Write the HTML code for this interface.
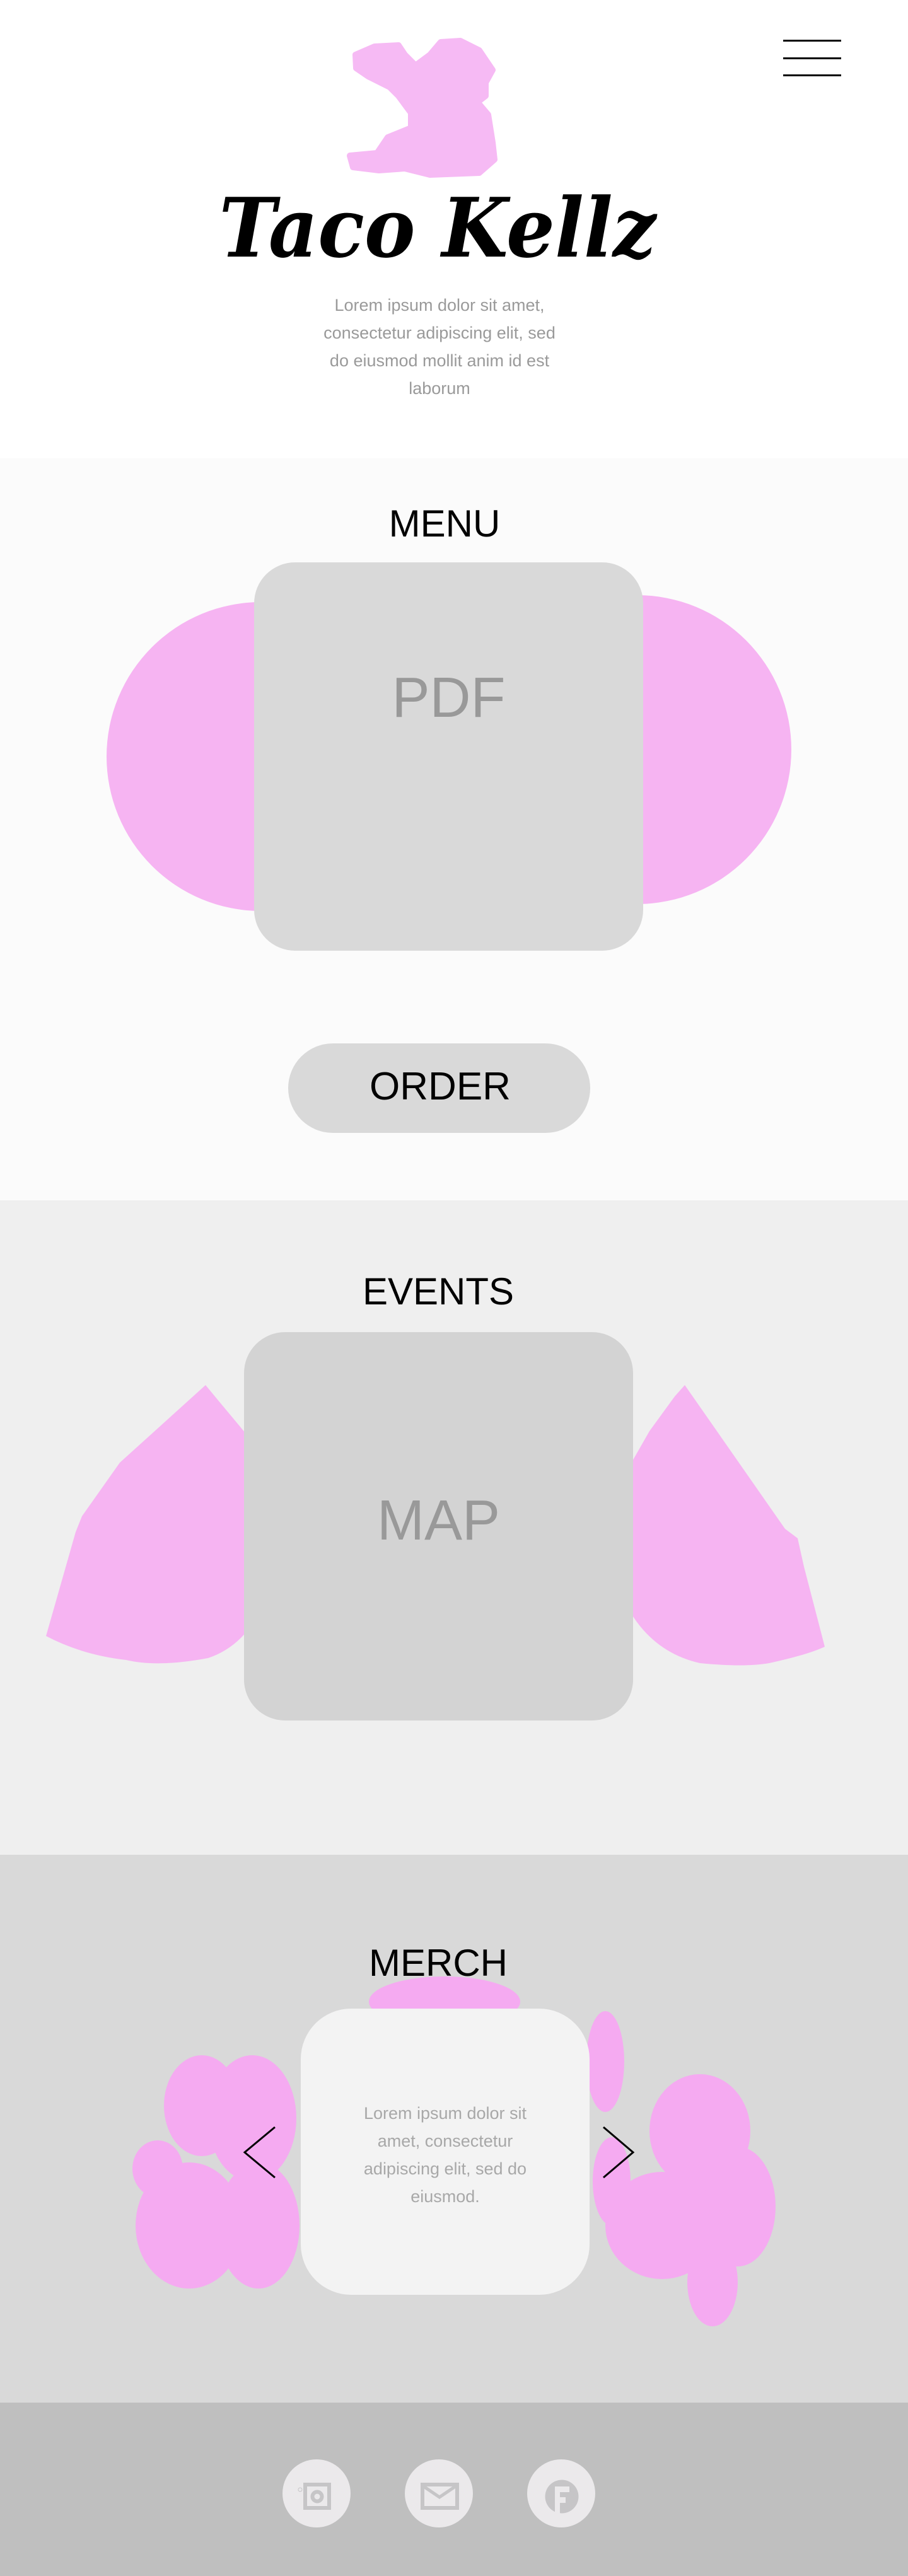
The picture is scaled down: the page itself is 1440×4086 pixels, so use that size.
<!DOCTYPE html>
<html><head><meta charset="utf-8">
<style>
*{margin:0;padding:0;box-sizing:border-box}
html,body{width:1440px;height:4086px;overflow:hidden;background:#fff;font-family:"Liberation Sans","DejaVu Sans",sans-serif}
.abs{position:absolute}
.sec{position:absolute;left:0;width:1440px}
.h{position:absolute;width:600px;text-align:center;color:#000;font-weight:normal;white-space:nowrap}
</style></head><body>
<!-- header -->
<div class="sec" style="top:0;height:727px;background:#fff"></div>
<div class="abs" style="left:1242px;top:63px;width:92px;height:3px;background:#000"></div>
<div class="abs" style="left:1242px;top:91px;width:92px;height:3px;background:#000"></div>
<div class="abs" style="left:1242px;top:118px;width:92px;height:3px;background:#000"></div>
<svg class="abs" style="left:0;top:0" width="1440" height="300">
<path fill="#f6baf4" stroke="#f6baf4" stroke-width="10" stroke-linejoin="round" d="M564 87 L594 74 L632 72 L642 87 L659 104 L682 87 L699 67 L730 65 L760 80 L781 111 L770 131 L770 152 L757 162 L774 182 L781 226 L784 253 L760 274 L682 277 L642 267 L601 270 L560 265 L555 247 L598 243 L615 218 L652 203 L652 179 L632 152 L618 138 L584 121 L565 108 Z"/>
</svg>
<div class="abs" style="left:194px;top:282px;width:1000px;text-align:center;white-space:nowrap;font-family:'DejaVu Serif','Liberation Serif',serif;font-style:italic;font-weight:bold;font-size:130px;line-height:160px;color:#000;transform:scaleX(0.93);transform-origin:500px 0">Taco Kellz</div>
<div class="abs" style="left:442px;top:462px;width:510px;text-align:center;font-size:27px;line-height:44px;color:#9a9a9a">Lorem ipsum dolor sit amet,<br>consectetur adipiscing elit, sed<br>do eiusmod mollit anim id est<br>laborum</div>

<!-- menu -->
<div class="sec" style="top:727px;height:1177px;background:#fbfbfb"></div>
<div class="h" style="left:405px;top:791px;font-size:60px;line-height:80px">MENU</div>
<div class="abs" style="left:169px;top:955px;width:490px;height:490px;border-radius:50%;background:#f6b4f2"></div>
<div class="abs" style="left:765px;top:944px;width:490px;height:490px;border-radius:50%;background:#f6b4f2"></div>
<div class="abs" style="left:403px;top:892px;width:617px;height:616px;border-radius:65px;background:#d9d9d9"></div>
<div class="abs" style="left:403px;top:1052px;width:617px;text-align:center;font-size:90px;line-height:110px;color:#999">PDF</div>
<div class="abs" style="left:457px;top:1655px;width:479px;height:142px;border-radius:71px;background:#d9d9d9"></div>
<div class="h" style="left:398px;top:1655px;font-size:62px;line-height:138px">ORDER</div>

<!-- events -->
<div class="sec" style="top:1904px;height:1038px;background:#efefef"></div>
<div class="h" style="left:395px;top:2009px;font-size:60px;line-height:80px">EVENTS</div>
<svg class="abs" style="left:0;top:2100px" width="1440" height="600">
<path fill="#f6b4f2" d="M326 97 L345 120 L395 180 L420 240 L420 440 Q390 510 330 530 Q250 545 200 533 Q130 525 73 495 L120 330 L130 305 L190 220 Z"/>
<path fill="#f6b4f2" d="M1086 97 L1070 115 L1030 170 L990 240 L990 440 Q1030 520 1110 538 Q1180 545 1220 538 Q1280 525 1308 512 L1275 385 L1265 340 L1245 325 Z"/>
</svg>
<div class="abs" style="left:387px;top:2113px;width:617px;height:616px;border-radius:65px;background:#d3d3d3"></div>
<div class="abs" style="left:387px;top:2357px;width:617px;text-align:center;font-size:90px;line-height:110px;color:#999">MAP</div>

<!-- merch -->
<div class="sec" style="top:2942px;height:869px;background:#d9d9d9"></div>
<svg class="abs" style="left:0;top:3100px" width="1440" height="650" fill="#f5aaf1">
<ellipse cx="705" cy="75" rx="120" ry="40"/>
<ellipse cx="320" cy="240" rx="60" ry="80"/>
<ellipse cx="400" cy="260" rx="70" ry="100"/>
<ellipse cx="300" cy="430" rx="85" ry="100"/>
<ellipse cx="410" cy="430" rx="65" ry="100"/>
<ellipse cx="250" cy="340" rx="40" ry="45"/>
<ellipse cx="960" cy="170" rx="30" ry="80"/>
<ellipse cx="1110" cy="280" rx="80" ry="90"/>
<ellipse cx="1170" cy="400" rx="60" ry="95"/>
<ellipse cx="1050" cy="430" rx="90" ry="85"/>
<ellipse cx="1130" cy="520" rx="40" ry="70"/>
<ellipse cx="970" cy="360" rx="30" ry="70"/>
</svg>
<div class="h" style="left:395px;top:3074px;font-size:60px;line-height:80px">MERCH</div>
<div class="abs" style="left:477px;top:3186px;width:458px;height:454px;border-radius:80px;background:#f3f3f3"></div>
<div class="abs" style="left:497px;top:3330px;width:418px;text-align:center;font-size:27px;line-height:44px;color:#a8a8a8">Lorem ipsum dolor sit<br>amet, consectetur<br>adipiscing elit, sed do<br>eiusmod.</div>
<svg class="abs" style="left:0;top:3360px" width="1440" height="110" fill="none" stroke="#000" stroke-width="3">
<path d="M436 14 L388 54 L436 94"/>
<path d="M957 14 L1004 54 L957 94"/>
</svg>

<!-- footer -->
<div class="sec" style="top:3811px;height:275px;background:#bfbfbf"></div>
<svg class="abs" style="left:0;top:3880px" width="1440" height="150">
<circle cx="502" cy="75" r="54" fill="#ebe9eb"/>
<circle cx="696" cy="75" r="54" fill="#ebe9eb"/>
<circle cx="890" cy="75" r="54" fill="#ebe9eb"/>
<rect x="484" y="61" width="38" height="37" fill="none" stroke="#c6c5c7" stroke-width="6"/>
<circle cx="503" cy="80" r="7.5" fill="none" stroke="#c6c5c7" stroke-width="6"/>
<circle cx="476" cy="69" r="3" fill="none" stroke="#c6c5c7" stroke-width="1"/>
<rect x="670" y="61" width="55" height="37" fill="none" stroke="#c6c5c7" stroke-width="6"/>
<path d="M672 64 L697 81 L722 64" fill="none" stroke="#c6c5c7" stroke-width="5"/>
<circle cx="891" cy="80" r="26.5" fill="#c6c5c7"/>
<path d="M880 107 L880 64 L903 64 L903 73 L888 73 L888 81 L897 81 L897 90 L888 90 L888 107 Z" fill="#ebe9eb"/>
</svg>
</body></html>
